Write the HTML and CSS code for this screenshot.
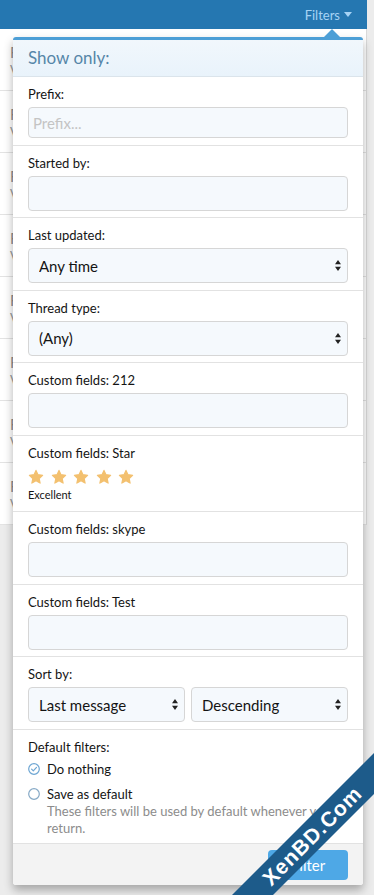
FILE: index.html
```html
<!DOCTYPE html>
<html lang="en">
<head>
<meta charset="utf-8">
<title>Filters</title>
<link rel="stylesheet" href="styles.css">
</head>
<body>
<div class="page">
  <header class="topbar">
    <span class="filters-link">Filters
      <svg class="caret" width="8" height="5" viewBox="0 0 8 5"><path d="M0 0H8L4 5z" fill="currentColor"/></svg>
    </span>
  </header>
  <ul class="threads">
    <li class="thread"><div class="t-title">F</div><div class="t-meta">V</div></li>
    <li class="thread"><div class="t-title">F</div><div class="t-meta">V</div></li>
    <li class="thread"><div class="t-title">F</div><div class="t-meta">V</div></li>
    <li class="thread"><div class="t-title">F</div><div class="t-meta">V</div></li>
    <li class="thread"><div class="t-title">F</div><div class="t-meta">V</div></li>
    <li class="thread"><div class="t-title">F</div><div class="t-meta">V</div></li>
    <li class="thread"><div class="t-title">F</div><div class="t-meta">V</div></li>
    <li class="thread"><div class="t-title">F</div><div class="t-meta">V</div></li>
  </ul>
</div>

<form class="menu">
  <span class="menu-arrow"></span>
  <h3 class="menu-header">Show only:</h3>

  <div class="menu-row">
    <label class="row-label">Prefix:</label>
    <input class="input input-prefix" type="text" placeholder="Prefix...">
  </div>

  <div class="menu-row">
    <label class="row-label">Started by:</label>
    <input class="input" type="text">
  </div>

  <div class="menu-row">
    <label class="row-label">Last updated:</label>
    <select class="input select"><option>Any time</option></select>
  </div>

  <div class="menu-row">
    <label class="row-label">Thread type:</label>
    <select class="input select"><option>(Any)</option></select>
  </div>

  <div class="menu-row">
    <label class="row-label">Custom fields: 212</label>
    <input class="input" type="text">
  </div>

  <div class="menu-row">
    <label class="row-label">Custom fields: Star</label>
    <div class="rating">
      <svg class="star" viewBox="0 0 16 16"><path d="M8 1.4l2 4.3 4.6.6-3.4 3.2.9 4.6L8 11.8l-4.1 2.3.9-4.6L1.4 6.3 6 5.7z"/></svg>
      <svg class="star" viewBox="0 0 16 16"><path d="M8 1.4l2 4.3 4.6.6-3.4 3.2.9 4.6L8 11.8l-4.1 2.3.9-4.6L1.4 6.3 6 5.7z"/></svg>
      <svg class="star" viewBox="0 0 16 16"><path d="M8 1.4l2 4.3 4.6.6-3.4 3.2.9 4.6L8 11.8l-4.1 2.3.9-4.6L1.4 6.3 6 5.7z"/></svg>
      <svg class="star" viewBox="0 0 16 16"><path d="M8 1.4l2 4.3 4.6.6-3.4 3.2.9 4.6L8 11.8l-4.1 2.3.9-4.6L1.4 6.3 6 5.7z"/></svg>
      <svg class="star" viewBox="0 0 16 16"><path d="M8 1.4l2 4.3 4.6.6-3.4 3.2.9 4.6L8 11.8l-4.1 2.3.9-4.6L1.4 6.3 6 5.7z"/></svg>
    </div>
    <div class="rating-text">Excellent</div>
  </div>

  <div class="menu-row">
    <label class="row-label">Custom fields: skype</label>
    <input class="input" type="text">
  </div>

  <div class="menu-row">
    <label class="row-label">Custom fields: Test</label>
    <input class="input" type="text">
  </div>

  <div class="menu-row">
    <label class="row-label">Sort by:</label>
    <div class="sort-pair">
      <select class="input select"><option>Last message</option></select>
      <select class="input select"><option>Descending</option></select>
    </div>
  </div>

  <div class="menu-row">
    <label class="row-label">Default filters:</label>
    <ul class="radios">
      <li class="radio">
        <svg class="radio-icon" width="12" height="12" viewBox="0 0 12 12"><circle cx="6" cy="6" r="5.3" fill="none" stroke="#6ea6d3" stroke-width="1.2"/><path d="M3.6 6.2l1.7 1.7 3.2-3.5" fill="none" stroke="#6ea6d3" stroke-width="1.2" stroke-linecap="round" stroke-linejoin="round"/></svg>
        <span>Do nothing</span>
      </li>
      <li class="radio radio-second">
        <svg class="radio-icon" width="12" height="12" viewBox="0 0 12 12"><circle cx="6" cy="6" r="5.3" fill="none" stroke="#86a9c6" stroke-width="1.2"/></svg>
        <span>Save as default</span>
      </li>
    </ul>
    <p class="radio-hint">These filters will be used by default whenever you return.</p>
  </div>

  <div class="menu-footer">
    <button class="button" type="button">Filter</button>
  </div>
</form>

<div class="wm-clip"><div class="watermark">XenBD.Com</div></div>
</body>
</html>
```

FILE: styles.css
```css
* { box-sizing: border-box; }

html, body {
  margin: 0;
  padding: 0;
  height: 100%;
}

body {
  background: #ececec;
  font-family: Lato, "Liberation Sans", sans-serif;
  font-size: 13px;
  color: #141414;
  overflow: hidden;
  position: relative;
}

.page {
  width: 367px;
}

.topbar {
  height: 29px;
  background: #2577b1;
  display: flex;
  justify-content: flex-end;
  align-items: center;
  padding-right: 15px;
}

.filters-link {
  color: #a6d3f5;
  font-size: 13px;
  display: flex;
  align-items: center;
  gap: 4px;
}

.caret { display: block; }

.threads {
  list-style: none;
  margin: 0;
  padding: 0;
  background: #fff;
  border-right: 1px solid #d9d9d9;
}

.thread {
  height: 62px;
  border-bottom: 1px solid #e3e3e3;
  padding: 13px 10px 0;
}

.t-title {
  font-size: 15px;
  line-height: 20px;
  color: #8e8e8e;
}

.t-meta {
  font-size: 13px;
  line-height: 17px;
  color: #9a9a9a;
}

/* filter menu */
.menu {
  position: absolute;
  left: 13px;
  top: 37px;
  width: 350px;
  margin: 0;
  background: #fff;
  border-top: 3px solid #4d9fd6;
  border-radius: 3px;
  box-shadow: 0 5px 10px rgba(0, 0, 0, 0.3);
}

.menu-arrow {
  position: absolute;
  top: -11px;
  left: 311px;
  width: 0;
  height: 0;
  border-left: 8px solid transparent;
  border-right: 8px solid transparent;
  border-bottom: 8px solid #4d9fd6;
}

.menu-header {
  margin: 0;
  height: 37px;
  line-height: 36px;
  padding: 0 15px;
  font-size: 17px;
  font-weight: normal;
  color: #5686a8;
  background: linear-gradient(to bottom, #f1f7fc, #e9f3fb);
  border-bottom: 1px solid #dbe4eb;
}

.menu-row {
  padding: 8px 15px 6.5px;
  border-bottom: 1px solid #e2e2e2;
}

.row-label {
  display: block;
  line-height: 18px;
  margin-bottom: 4px;
  font-size: 13px;
  color: #141414;
}

.input {
  display: block;
  width: 100%;
  height: 35px;
  margin: 0;
  border: 1px solid #d6d6d6;
  border-radius: 4px;
  background-color: #f5f9fd;
  font-family: Lato, "Liberation Sans", sans-serif;
  font-size: 15px;
  color: #141414;
  padding: 0 10px;
  outline: none;
}

.input-prefix {
  height: 31px;
  padding: 0 4px;
}

.input::placeholder {
  color: #c4c4c4;
}

.select {
  -webkit-appearance: none;
  appearance: none;
  background-image: url("data:image/svg+xml;utf8,<svg xmlns='http://www.w3.org/2000/svg' width='6' height='11' viewBox='0 0 6 11'><path d='M3 0L6 4.3H0z M0 6.7H6L3 11z' fill='%23222'/></svg>");
  background-repeat: no-repeat;
  background-position: right 6px center;
  padding-right: 20px;
}

.sort-pair {
  display: grid;
  grid-template-columns: 1fr 1fr;
  gap: 6px;
}

.rating {
  height: 22px;
  padding-top: 3px;
  display: flex;
  gap: 6.5px;
}

.star {
  width: 16px;
  height: 16px;
  display: block;
  fill: #f3c06f;
  stroke: #f3c06f;
  stroke-width: 1.2;
  stroke-linejoin: round;
}

.rating-text {
  font-size: 11px;
  line-height: 14px;
  margin-bottom: 3px;
  color: #141414;
}

.radios {
  list-style: none;
  margin: 0;
  padding: 0;
}

.radio {
  display: flex;
  align-items: center;
  gap: 7px;
  line-height: 18px;
  font-size: 13px;
}

.radio-second { margin-top: 7px; }

.radio-icon { display: block; flex: none; }

.radio-hint {
  margin: 0;
  padding-left: 19px;
  font-size: 13px;
  line-height: 17px;
  color: #8c8c8c;
}

.menu-footer {
  background: #f3f3f3;
  padding: 6px 15px 5px;
  display: flex;
  justify-content: flex-end;
  border-radius: 0 0 3px 3px;
}

.button {
  width: 80px;
  height: 30px;
  border: 0;
  border-radius: 4px;
  background: #4ea8e6;
  color: #fff;
  font-family: Lato, "Liberation Sans", sans-serif;
  font-size: 15px;
  padding: 0;
}

/* watermark overlay */
.wm-clip {
  position: fixed;
  inset: 0;
  overflow: hidden;
  pointer-events: none;
}

.watermark {
  position: absolute;
  left: 112px;
  top: 821px;
  width: 400px;
  height: 29px;
  line-height: 29px;
  transform: rotate(-45deg);
  background: #1d5b8a;
  color: #fff;
  font-family: "Liberation Sans", sans-serif;
  font-weight: bold;
  font-size: 21px;
  letter-spacing: 1px;
  text-align: center;
}
```
